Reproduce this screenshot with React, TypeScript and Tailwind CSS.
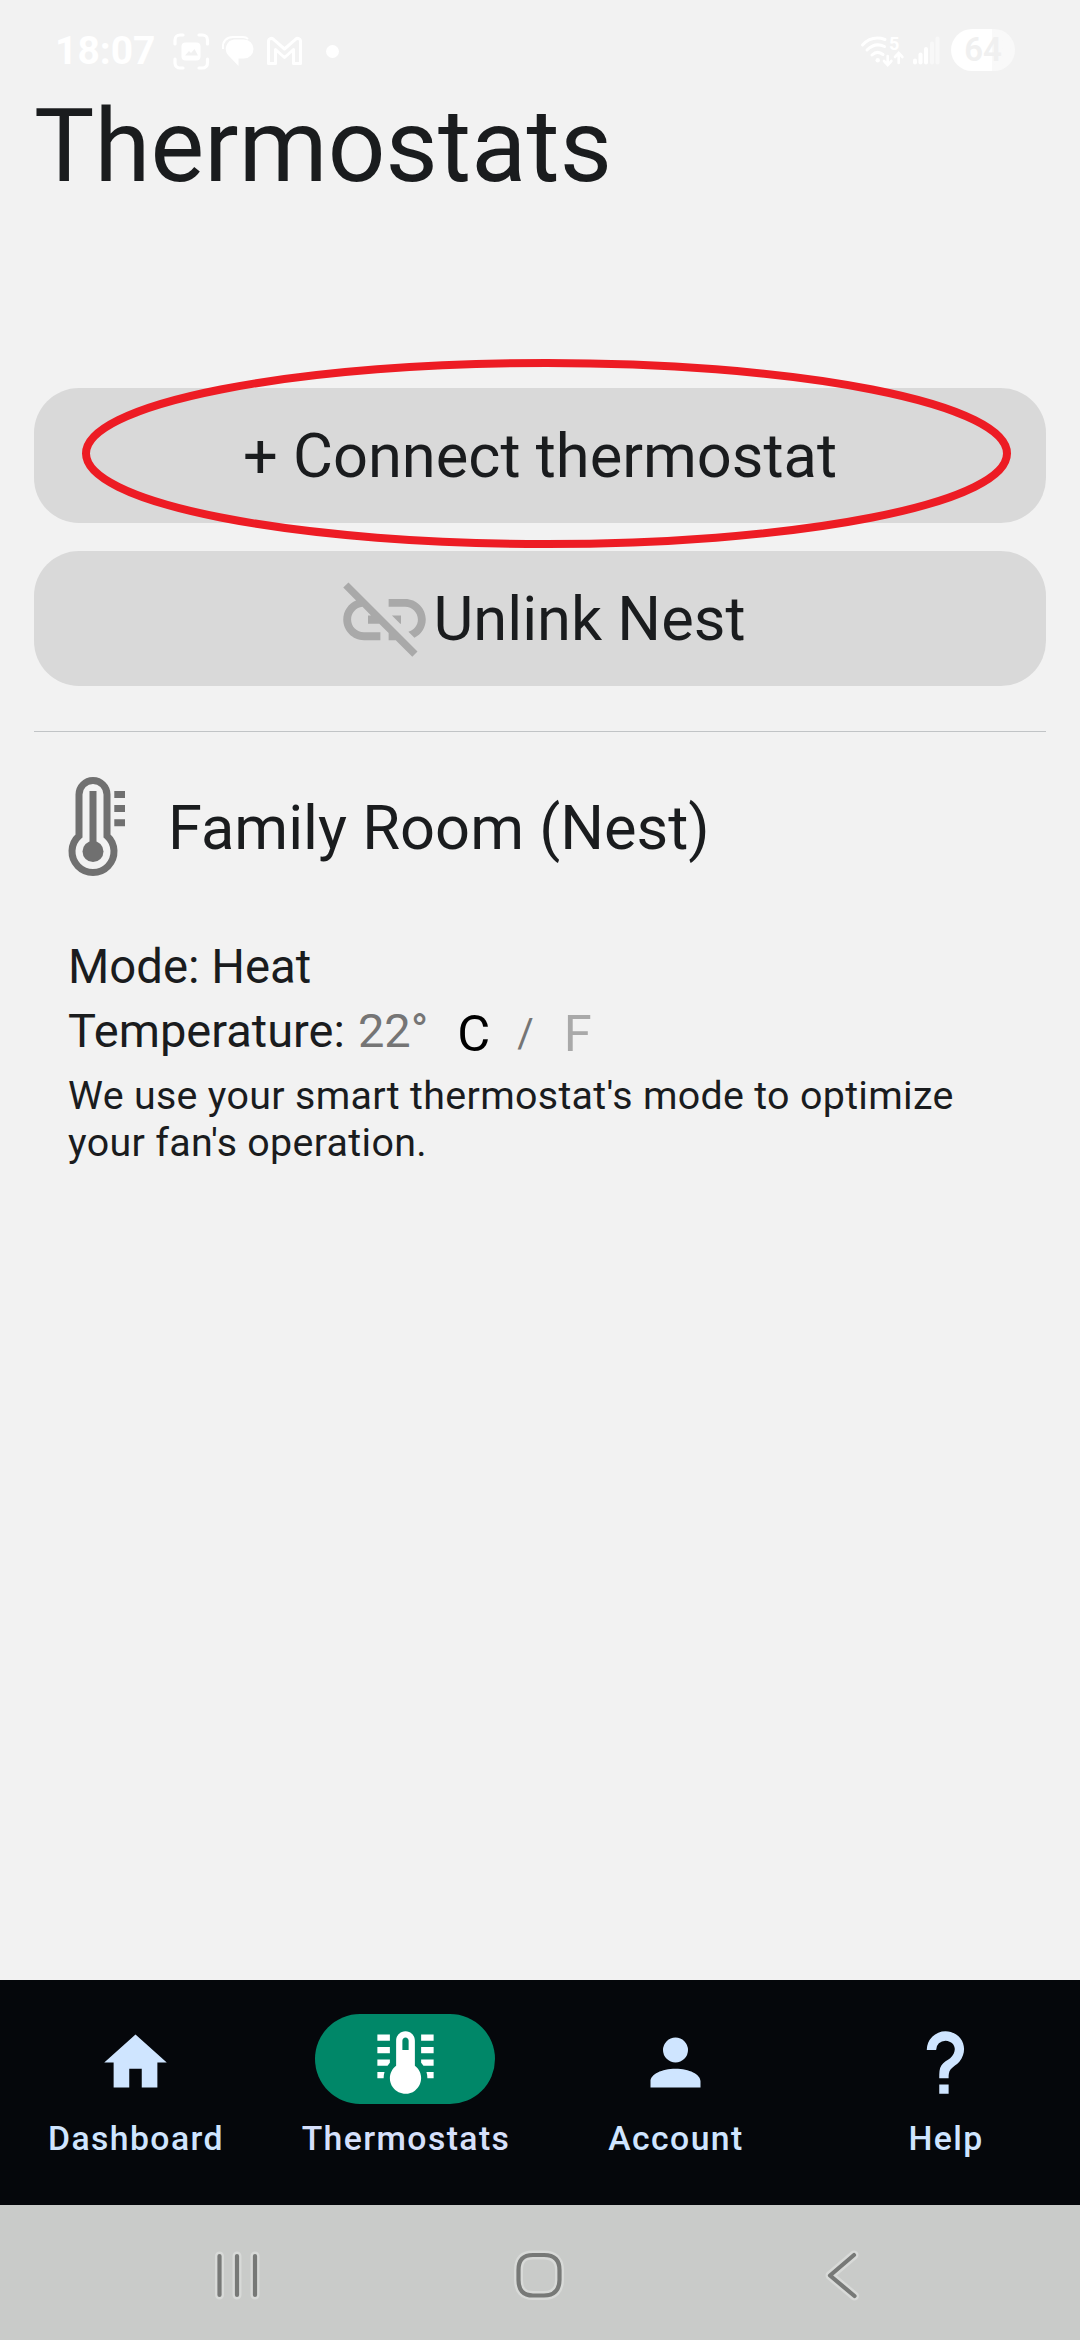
import React from 'react';

interface NavItem {
  label: string;
  path: string;
  active?: boolean;
}

const navItems: NavItem[] = [
  {
    label: 'Dashboard',
    path: 'M10 20V14H14V20H19V12H22L12 3L2 12H5V20H10Z',
  },
  {
    label: 'Thermostats',
    path: 'M17 3H21V5H17V3M17 7H21V9H17V7M17 11H21V13H17.75L17 12.1V11M21 15V17H19C19 16.31 18.9 15.63 18.71 15H21M7 3V5H3V3H7M7 7V9H3V7H7M7 11V12.1L6.25 13H3V11H7M3 15H5.29C5.1 15.63 5 16.31 5 17H3V15M15 13V5C15 3.34 13.66 2 12 2S9 3.34 9 5V13C6.79 14.66 6.34 17.79 8 20S12.79 22.66 15 21 17.66 16.21 16 14C15.72 13.62 15.38 13.28 15 13M12 4C12.55 4 13 4.45 13 5V8H11V5C11 4.45 11.45 4 12 4Z',
    active: true,
  },
  {
    label: 'Account',
    path: 'M12 4A4 4 0 0 1 16 8A4 4 0 0 1 12 12A4 4 0 0 1 8 8A4 4 0 0 1 12 4M12 14C16.42 14 20 15.79 20 18V20H4V18C4 15.79 7.58 14 12 14Z',
  },
  {
    label: 'Help',
    path: 'M10 19H13V22H10V19M12 2C17.35 2.22 19.68 7.62 16.5 11.67C15.67 12.67 14.33 13.33 13.67 14.17C13 15 13 16 13 17H10C10 15.33 10 13.92 10.67 12.92C11.33 11.92 12.67 11.33 13.5 10.67C15.92 8.43 15.32 5.26 12 5A3 3 0 0 0 9 8H6A6 6 0 0 1 12 2Z',
  },
];

const StatusBar: React.FC = () => {
  return (
    <div className="flex h-[84px] justify-between pl-[55px] pr-[65px] text-white">
      <div className="flex h-[102px] items-center">
        <div className="w-[118px] text-[39px] font-bold leading-[100px]">
          18:07
        </div>
        {/* screenshot, messages and mail notifications */}
        <svg width="37" height="37" viewBox="0 0 37 37" fill="none">
          <path
            d="M2 11V7a5 5 0 0 1 5-5h3M26 2h3.500a5 5 0 0 1 5 5v4M34.500 26v4a5 5 0 0 1-5 5H26M10 35H7a5 5 0 0 1-5-5v-4"
            stroke="white"
            strokeWidth="3.200"
            strokeLinecap="round"
          />
          <rect x="8.500" y="9.500" width="19" height="18" rx="4" fill="white" />
          <path
            d="M12 22.500l4-4.500 2 2 3.500-4 3.500 6.500z"
            fill="#f1f1f1"
          />
        </svg>
        <svg className="ml-[12px]" width="32" height="32" viewBox="0 0 32 32">
          <path
            d="M1 14C0 6 5 2 11 2h10c3 0 4 1 5 2"
            stroke="white"
            strokeWidth="2"
            fill="none"
          />
          <path
            d="M12 4.500h10a9.500 9.500 0 0 1 0 19h-5.500V31L6 20A9.500 9.500 0 0 1 12 4.500z"
            fill="white"
          />
        </svg>
        <svg
          className="ml-[12px]"
          width="37"
          height="30"
          viewBox="0 0 37 30"
          fill="none"
        >
          <path
            d="M2.500 27.500V5.500C2.500 2.500 5.500 1.500 7.500 3.300L18.500 13 29.500 3.300C31.500 1.500 34.500 2.500 34.500 5.500V27.500H27.500V13.500L18.500 21.500 9.500 13.500V27.500Z"
            stroke="white"
            strokeWidth="3"
            strokeLinejoin="round"
          />
        </svg>
        <div className="ml-[23px] h-[13px] w-[13px] rounded-full bg-white"></div>
      </div>
      <div className="flex h-[100px] items-center">
        <div className="relative">
          <svg width="45" height="34" viewBox="0 0 45 34" fill="none">
            <g stroke="white" strokeWidth="3" strokeLinecap="round">
              <path d="M2.500 12Q12 2 25 6.500" />
              <path d="M7 17Q15 9 24.500 13.500" />
              <path d="M12 22Q17.500 17 23 21.500" />
              <path
                d="M27.700 23v8.500M24 28l3.700 4L31.400 28"
                strokeWidth="2.600"
              />
              <path
                d="M38.700 30v-9.500M35 24l3.700-4L42.400 24"
                strokeWidth="2.600"
              />
            </g>
            <circle cx="17.700" cy="27.300" r="2.200" fill="white" />
          </svg>
          <div className="absolute left-[29px] top-[2px] text-[18px] font-bold leading-[18px]">
            5
          </div>
        </div>
        <svg className="ml-[8px]" width="28" height="30" viewBox="0 0 28 30">
          <rect y="23.500" width="4" height="6" rx="2" fill="white" />
          <rect x="5.500" y="17.500" width="4" height="12" rx="2" fill="white" />
          <rect x="11" y="12" width="4" height="17.500" rx="2" fill="white" />
          <rect x="17" y="6.500" width="4" height="23" rx="2" fill="#f8f8f8" />
          <rect x="22.500" y="1.500" width="4" height="28" rx="2" fill="#f8f8f8" />
        </svg>
        <div className="ml-[10px] flex h-[42px] w-[64px] items-center justify-center rounded-full bg-linear-to-r from-white from-64% to-[#f9f9f9] to-64% text-[33px] font-semibold text-[#f0f0f0]">
          64
        </div>
      </div>
    </div>
  );
};

const ThermometerIcon: React.FC = () => {
  return (
    <svg width="60" height="100" viewBox="0 0 60 100" fill="none">
      <path
        d="M11 58.850V17.500a14 14 0 0 1 28 0V58.850A21 21 0 1 1 11 58.850Z"
        stroke="#707070"
        strokeWidth="7"
      />
      <circle cx="25" cy="74.500" r="10.500" fill="#707070" />
      <path
        d="M21.500 14h7v60h-7zM46.300 14h10.700v7H46.300zM46.300 28h10.700v7H46.300zM46.300 42.300h10.700v7H46.300z"
        fill="#707070"
      />
    </svg>
  );
};

const BottomNav: React.FC = () => {
  return (
    <div className="flex h-[225px] bg-[#05070b] pt-[34px]">
      {navItems.map((item) => (
        <div key={item.label} className="flex w-1/4 flex-col items-center">
          <div
            className={
              item.active
                ? 'flex h-[90px] w-[180px] justify-center rounded-full bg-[#008768] pt-[10.500px]'
                : 'flex h-[90px] w-[180px] justify-center pt-[10.500px]'
            }
          >
            <svg
              width="75"
              height="75"
              viewBox="0 0 24 24"
              fill={item.active ? '#ffffff' : '#cfe5ff'}
            >
              <path d={item.path} />
            </svg>
          </div>
          <div
            className={
              item.active
                ? 'mt-[12px] pl-[2px] text-[33.75px] font-medium leading-[45px] tracking-[1.4px] text-[#d6e0fb]'
                : 'mt-[12px] pl-[2px] text-[33.75px] font-medium leading-[45px] tracking-[1.4px] text-[#cfe5ff]'
            }
          >
            {item.label}
          </div>
        </div>
      ))}
    </div>
  );
};

const SystemBar: React.FC = () => {
  const recents = 'M7.500 8v39M25 8v39M43 8v39';
  const home =
    'M23 5H33C43 5 48.500 10 48.500 20V30C48.500 40 43 45.500 33 45.500H22C12 45.500 7.500 40 7.500 30V20C7.500 10 12 5 22 5Z';
  const back = 'M34 7L10 27.500L34.500 48';

  return (
    <div className="flex h-[135px] bg-[#c9cbc9] pl-[212px] pt-[43px]">
      {[recents, home, back].map((d, i) => (
        <svg
          key={i}
          className={i === 0 ? '' : i === 1 ? 'ml-[239px] mt-[2px]' : 'ml-[249px]'}
          width="60"
          height="60"
          viewBox="0 0 60 60"
          fill="none"
          strokeLinecap="round"
          strokeLinejoin="round"
        >
          <path d={d} stroke="#d8dad8" strokeWidth="9" />
          <path d={d} stroke="#777977" strokeWidth="4.200" />
        </svg>
      ))}
    </div>
  );
};

const App: React.FC = () => {
  return (
    <div className="flex h-[2340px] w-[1080px] flex-col overflow-hidden bg-[#f2f2f2] font-[Roboto,sans-serif] text-[#1a1c1e]">
      <StatusBar />
      <h1 className="h-[304px] pl-[34px] text-[101.25px] leading-[126px] tracking-[0.15px]">
        Thermostats
      </h1>
      <div className="flex-1 px-[34px]">
        <div className="relative">
          <button className="flex h-[135px] w-full items-center justify-center rounded-[45px] bg-[#d9d9d9] pt-px text-[61.4px]">
            + Connect thermostat
          </button>
          <svg
            className="absolute left-[48px] top-[-29px]"
            width="929"
            height="189"
            viewBox="0 0 929 189"
            fill="none"
          >
            <ellipse
              cx="464.5"
              cy="94.5"
              rx="460.5"
              ry="90.5"
              stroke="#ed1c24"
              strokeWidth="8"
            />
          </svg>
        </div>
        <button className="mt-[28px] flex h-[135px] w-full items-center justify-center rounded-[45px] bg-[#d9d9d9] pt-px text-[61.4px]">
          <svg width="99" height="99" viewBox="0 0 24 24" fill="#a9a9a9">
            <path d="M17 7h-4v1.900h4c1.710 0 3.100 1.390 3.100 3.100 0 1.430-.98 2.630-2.310 2.980l1.460 1.460C20.880 15.610 22 13.950 22 12c0-2.760-2.240-5-5-5zm-1 4h-2.190l2 2H16zM2 4.270l3.110 3.110C3.290 8.120 2 9.910 2 12c0 2.760 2.240 5 5 5h4v-1.900H7c-1.710 0-3.100-1.390-3.100-3.100 0-1.590 1.210-2.900 2.760-3.070L8.730 11H8v2h2.730L13 15.270V17h1.730l4.010 4L20 19.740 3.270 3 2 4.270z" />
          </svg>
          Unlink Nest
        </button>
        <div className="mt-[45px] h-px bg-[#c1c4c6]"></div>
        <div className="px-[34px] pt-[45px]">
          <div className="flex h-[100px] items-center">
            <ThermometerIcon />
            <div className="ml-[40px] pt-[2px] text-[61.4px]">
              Family Room (Nest)
            </div>
          </div>
          <div className="mt-[59px] text-[47.3px] leading-[63px]">
            Mode: Heat
          </div>
          <div className="flex h-[63px] items-start text-[47px] leading-[63px]">
            <div>Temperature:</div>
            <div className="ml-[13px] text-[#757575]">22°</div>
            <div className="ml-[29px] text-[50.6px] leading-[70px] text-black">
              C
            </div>
            <div className="ml-[27px] text-[40px] leading-[69px] text-[#757575]">
              /
            </div>
            <div className="ml-[30px] text-[50.6px] leading-[70px] text-[#a9a9a9]">
              F
            </div>
          </div>
          <div className="mt-[10px] text-[39.375px] leading-[47px] tracking-[0.32px]">
            We use your smart thermostat's mode to optimize
            <br />
            your fan's operation.
          </div>
        </div>
      </div>
      <BottomNav />
      <SystemBar />
    </div>
  );
};

export default App;
